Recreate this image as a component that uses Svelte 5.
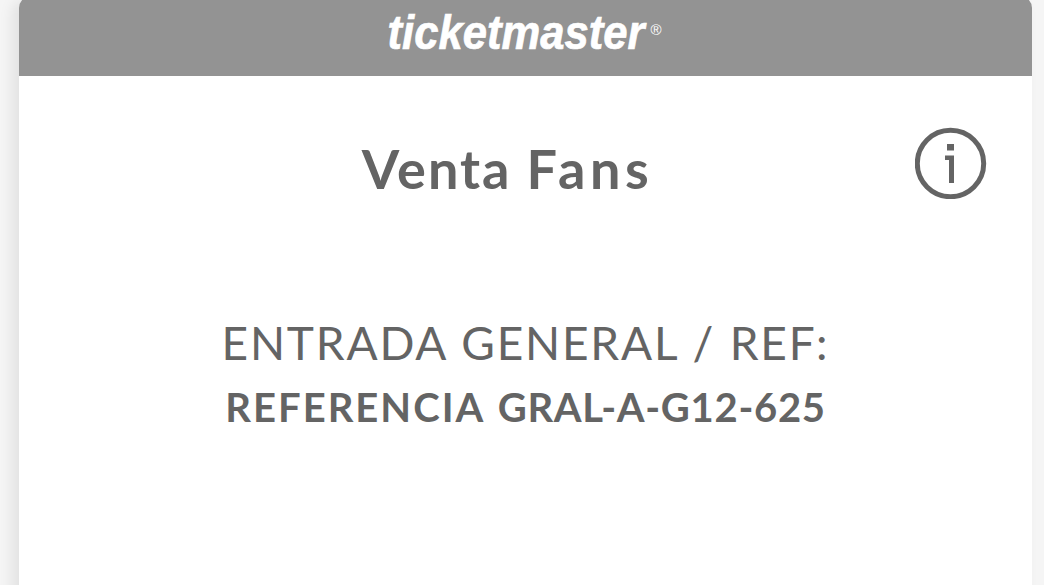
<script lang="ts">
	const ticket = {
		title: ['Venta', 'Fans'],
		label: ['ENTRADA', 'GENERAL', '/', 'REF:'],
		reference: ['REFERENCIA', 'GRAL-A-G12-625']
	};
</script>

<main class="page">
	<article class="ticket">
		<header class="brand-bar">
			<svg class="brand" viewBox="0 0 290 68" role="img" aria-label="ticketmaster">
				<text class="brand-name" x="3.500" y="49" textLength="257" lengthAdjust="spacingAndGlyphs">ticketmaster</text>
				<text class="brand-mark" x="266.500" y="35">®</text>
			</svg>
		</header>

		<div class="title-row">
			<h1 class="title">
				{#each ticket.title as word}<span>{word}</span>{' '}{/each}
			</h1>
			<button class="info" aria-label="Info">
				<svg viewBox="0 0 72 72">
					<circle cx="35.500" cy="36.500" r="33.2" />
					<path d="M32 17h7v6.500h-7zM30 28.500h9V56h-5V33h-4z" />
				</svg>
			</button>
		</div>

		<section class="details">
			<p class="label">
				{#each ticket.label as word}<span>{word}</span>{' '}{/each}
			</p>
			<p class="reference">
				{#each ticket.reference as word}<span>{word}</span>{' '}{/each}
			</p>
		</section>
	</article>
</main>

<style>
	:global(body) {
		background: #f5f5f5;
	}

	.page {
		height: 585px;
		padding: 0 12px 0 19px;
		box-sizing: border-box;
		overflow: hidden;
		font-family: Lato, sans-serif;
		color: #646464;
	}

	.ticket {
		height: 640px;
		margin-top: -4px;
		background: #fff;
		border-radius: 12px;
		box-shadow: -7px 4px 14px rgba(0, 0, 0, 0.08);
	}

	.brand-bar {
		display: flex;
		justify-content: center;
		height: 80px;
		padding-top: 4px;
		box-sizing: border-box;
		border-radius: 12px 12px 0 0;
		background: #939393;
	}

	.brand {
		width: 290px;
		height: 68px;
		margin-left: 6px;
		fill: #fff;
		overflow: visible;
	}

	.brand-name {
		font: italic 700 48px 'Liberation Sans', sans-serif;
		stroke: #fff;
		stroke-width: 0.7px;
	}

	.brand-mark {
		font: 15px 'Liberation Sans', sans-serif;
	}

	.title-row {
		display: grid;
		grid-template-columns: 72px 1fr 72px;
		align-items: start;
		padding: 51px 45px 0 9px;
	}

	.title {
		grid-column: 2;
		margin: 10px 0 0;
		text-align: center;
		font-size: 54px;
		line-height: 64px;
		font-weight: 700;
		letter-spacing: 2px;
		white-space: nowrap;
	}

	.title span:last-child {
		letter-spacing: 4.5px;
	}

	.info {
		display: block;
		width: 72px;
		height: 72px;
		padding: 0;
		border: 0;
		background: none;
	}

	.info svg {
		display: block;
	}

	.info circle {
		fill: none;
		stroke: #646464;
		stroke-width: 5;
	}

	.info path {
		fill: #646464;
	}

	.details {
		padding-top: 109px;
		text-align: center;
		white-space: nowrap;
	}

	.label,
	.reference {
		margin: 0;
		line-height: 64px;
	}

	.label {
		padding-top: 1px;
		font-size: 46px;
		letter-spacing: 1.8px;
		word-spacing: 1px;
	}

	.reference {
		font-size: 40px;
		font-weight: 700;
		letter-spacing: 2px;
		word-spacing: 2px;
	}

	.reference span:last-child {
		letter-spacing: 0.7px;
	}
</style>
